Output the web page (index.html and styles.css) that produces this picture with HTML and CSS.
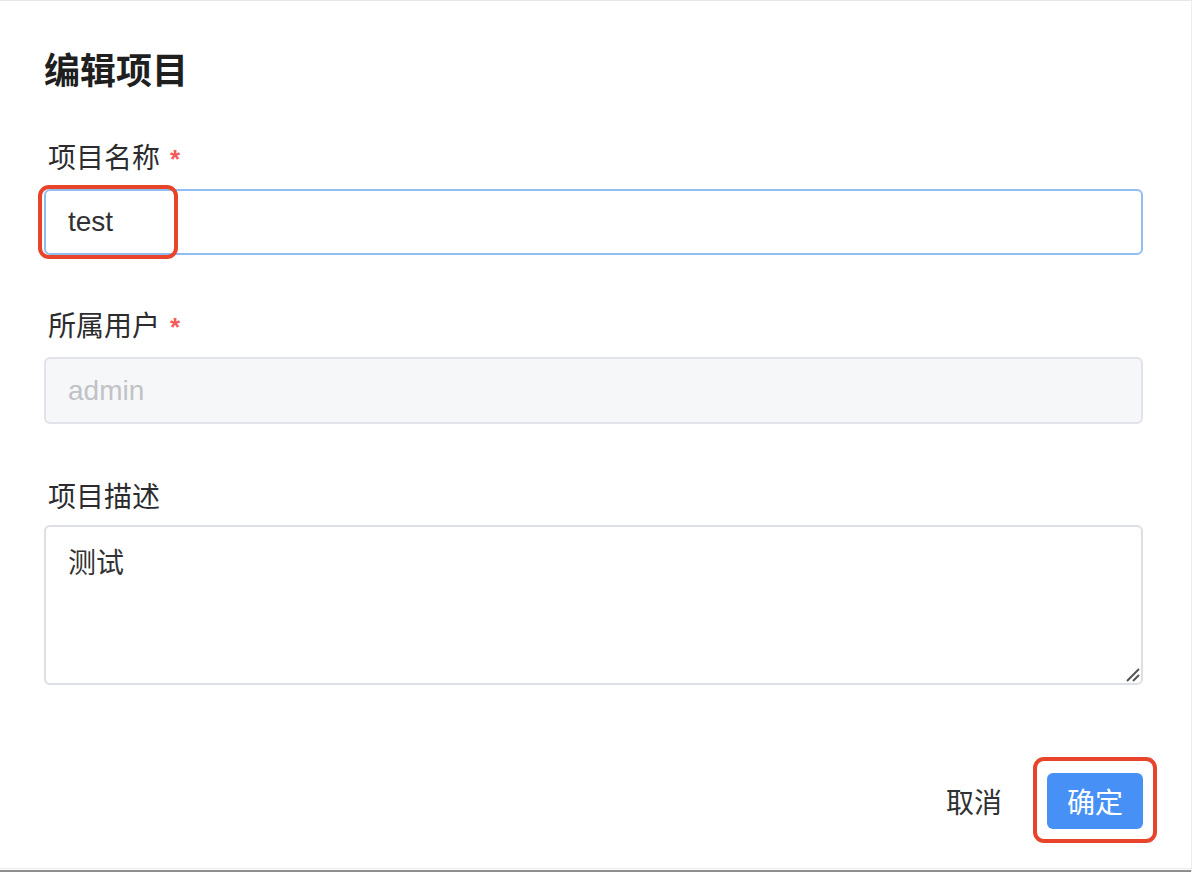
FILE: index.html
```html
<!DOCTYPE html>
<html lang="zh-CN">
<head>
<meta charset="utf-8">
<title>编辑项目</title>
<link rel="stylesheet" href="styles.css">
</head>
<body>
<div class="window">
  <div class="dialog">
    <h1 class="title">编辑项目</h1>
    <form class="form">
      <div class="field">
        <label class="label">项目名称<span class="req">*</span></label>
        <div class="control">
          <input class="input input-focus" type="text" value="test">
          <span class="mark mark-input"></span>
        </div>
      </div>
      <div class="field field-user">
        <label class="label">所属用户<span class="req">*</span></label>
        <div class="control">
          <input class="input input-disabled" type="text" value="admin" disabled>
        </div>
      </div>
      <div class="field field-desc">
        <label class="label">项目描述</label>
        <div class="control">
          <textarea class="textarea">测试</textarea>
          <svg class="grip" width="18" height="18" viewBox="0 0 18 18"><path d="M16 4 L4 16 M16 10 L10 16" stroke="#555" stroke-width="2" fill="none"/></svg>
        </div>
      </div>
    </form>
    <div class="footer">
      <button class="btn btn-text" type="button">取消</button>
      <div class="btn-wrap">
        <button class="btn btn-primary" type="button">确定</button>
        <span class="mark mark-btn"></span>
      </div>
    </div>
  </div>
  <div class="bottom-edge"></div>
</div>
</body>
</html>
```

FILE: styles.css
```css
* { box-sizing: border-box; }
html, body { margin: 0; padding: 0; background: #fff; }
body {
  font-family: "Liberation Sans", "Noto Sans CJK SC", sans-serif;
  color: #303133;
}
.window {
  width: 1192px;
  height: 872px;
  display: flex;
  flex-direction: column;
  border-top: 1px solid #e6e7ea;
  border-right: 1px solid #ececec;
}
.dialog {
  flex: 1;
  padding: 43px 48px 0 44px;
}
.title {
  margin: 0 0 44px 0;
  font-size: 36px;
  line-height: 48px;
  font-weight: 700;
  color: #1f1f1f;
  font-family: "Noto Sans CJK SC", sans-serif;
}
.form { display: flex; flex-direction: column; }
.field { display: flex; flex-direction: column; gap: 10px; }
.field-user { margin-top: 49px; }
.field-desc { margin-top: 51px; }
.label {
  display: block;
  padding-left: 4px;
  font-size: 28px;
  line-height: 40px;
  color: #2c2c2e;
  font-family: "Noto Sans CJK SC", sans-serif;
}
.req {
  color: #f25c5c;
  margin-left: 10px;
  font-size: 26px;
  font-weight: 700;
  font-family: "Liberation Sans", sans-serif;
}
.control { position: relative; }
.input, .textarea {
  display: block;
  width: 100%;
  margin: 0;
  border: 2px solid #dcdfe6;
  border-radius: 6px;
  font-family: "Liberation Sans", "Noto Sans CJK SC", sans-serif;
  font-size: 28px;
  color: #303133;
  background: #fff;
  outline: none;
}
.input {
  height: 66px;
  padding: 0 22px;
}
.input-focus { border-color: #92bdf2; }
.input-disabled {
  height: 67px;
  background: #f6f7f9;
  border-color: #e2e3e8;
  color: #c0c2c6;
  -webkit-text-fill-color: #c0c2c6;
}
.textarea {
  height: 160px;
  padding: 12px 22px;
  line-height: 44px;
  resize: none;
  font-family: "Noto Sans CJK SC", sans-serif;
  color: #333;
}
.grip {
  position: absolute;
  right: 2px;
  bottom: 2px;
}
.mark {
  position: absolute;
  border: 4px solid #e8442a;
  border-radius: 11px;
  pointer-events: none;
}
.mark-input {
  left: -6px;
  top: -4px;
  width: 140px;
  height: 74px;
}
.footer {
  display: flex;
  justify-content: flex-end;
  align-items: center;
  gap: 30px;
  margin-top: 88px;
}
.btn {
  font-family: "Noto Sans CJK SC", sans-serif;
  font-size: 28px;
  border: none;
  background: none;
  height: 56px;
  line-height: 56px;
  padding: 0;
  cursor: pointer;
}
.btn-text {
  color: #303133;
  padding: 0 15px;
}
.btn-wrap { position: relative; }
.btn-primary {
  display: block;
  width: 96px;
  background: #4791f6;
  color: #fff;
  border-radius: 6px;
}
.mark-btn {
  left: -14px;
  top: -16px;
  width: 124px;
  height: 86px;
}
.bottom-edge {
  height: 4px;
  border-top: 1px solid #ebebeb;
  border-bottom: 2px solid #8e8e8e;
}
```
